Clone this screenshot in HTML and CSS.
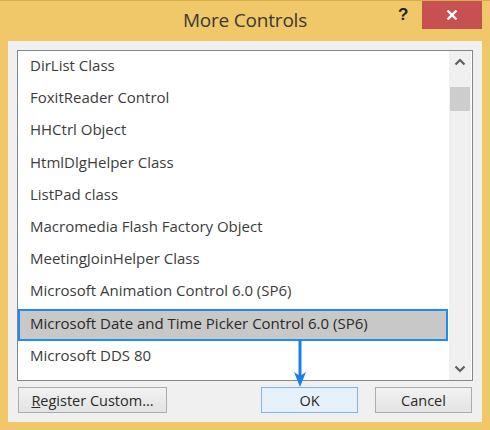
FILE: index.html
```html
<!DOCTYPE html>
<html>
<head>
<meta charset="utf-8">
<link rel="stylesheet" href="styles.css">
</head>
<body>
<div class="window">
  <div class="titlebar">
    <div class="title">More Controls</div>
    <div class="help">?</div>
    <div class="close">
      <svg width="12" height="12" viewBox="0 0 12 12"><path d="M1.5 1.5 L10.5 10.5 M10.5 1.5 L1.5 10.5" stroke="#fff" stroke-width="2.4" fill="none"/></svg>
    </div>
  </div>
  <div class="client">
    <div class="listbox">
      <ul class="items">
        <li>DirList Class</li>
        <li>FoxitReader Control</li>
        <li>HHCtrl Object</li>
        <li>HtmlDlgHelper Class</li>
        <li>ListPad class</li>
        <li>Macromedia Flash Factory Object</li>
        <li>MeetingJoinHelper Class</li>
        <li>Microsoft Animation Control 6.0 (SP6)</li>
        <li class="selected">Microsoft Date and Time Picker Control 6.0 (SP6)</li>
        <li>Microsoft DDS 80</li>
      </ul>
      <div class="scrollbar">
        <div class="sb-btn">
          <svg width="12" height="8" viewBox="0 0 12 8"><path d="M1.5 6.5 L6 2 L10.5 6.5" stroke="#606060" stroke-width="2.2" fill="none"/></svg>
        </div>
        <div class="sb-track"><div class="sb-thumb"></div></div>
        <div class="sb-btn">
          <svg width="12" height="8" viewBox="0 0 12 8"><path d="M1.5 1.5 L6 6 L10.5 1.5" stroke="#606060" stroke-width="2.2" fill="none"/></svg>
        </div>
      </div>
    </div>
    <div class="buttons">
      <button class="btn register"><u>R</u>egister Custom...</button>
      <div class="spacer"></div>
      <button class="btn ok">OK</button>
      <button class="btn cancel">Cancel</button>
    </div>
    <svg class="arrow" width="16" height="48" viewBox="0 0 16 48">
      <path d="M8 0 L8 36" stroke="#1a7fe6" stroke-width="3" fill="none"/>
      <path d="M2 32 L8 36 L14 32 L8 47 Z" fill="#1a7fe6"/>
    </svg>
  </div>
</div>
</body>
</html>
```

FILE: styles.css
```css
* { box-sizing: border-box; }
html, body { margin: 0; padding: 0; }
body {
  width: 490px;
  height: 430px;
  overflow: hidden;
  font-family: "Open Sans", "Noto Sans", sans-serif;
}
.window {
  width: 490px;
  height: 430px;
  background: #f0c86a;
  border-top: 1px solid #d9ad4e;
  display: flex;
  flex-direction: column;
}
.titlebar {
  height: 40px;
  position: relative;
  display: flex;
  justify-content: center;
  align-items: flex-start;
}
.title {
  font-size: 19px;
  color: #3a3a30;
  margin-top: 6px;
  letter-spacing: -0.2px;
}
.help {
  position: absolute;
  left: 398px;
  top: 4px;
  font-family: "Liberation Sans", sans-serif;
  font-weight: bold;
  font-size: 17px;
  color: #222;
}
.close {
  position: absolute;
  left: 422px;
  top: 0;
  width: 60px;
  height: 28px;
  background: #c75050;
  display: flex;
  align-items: center;
  justify-content: center;
}
.client {
  position: relative;
  margin: 0 8px;
  height: 381px;
  background: #f0f0f0;
  padding: 9px 9px 0 9px;
}
.listbox {
  height: 331px;
  border: 1px solid #828790;
  background: #fff;
  display: flex;
}
.items {
  list-style: none;
  margin: 0;
  padding: 0;
  flex: 1;
}
.items li {
  height: 32.2px;
  line-height: 25px;
  padding: 0 0 3px 10px;
  font-size: 15px;
  color: #3c3c3c;
  border: 2px solid transparent;
  white-space: nowrap;
}
.items li.selected {
  background: #c8c8c8;
  border-color: #1e8cf0;
  color: #2a2a2a;
  margin-right: 1px;
}
.scrollbar {
  width: 22px;
  background: #f0f0f0;
  display: flex;
  flex-direction: column;
  margin: 0 1px 0 0;
}
.sb-btn {
  height: 22px;
  display: flex;
  align-items: center;
  justify-content: center;
}
.sb-track {
  flex: 1;
  padding: 14px 1px 0 1px;
}
.sb-thumb {
  height: 24px;
  background: #cdcdcd;
}
.buttons {
  display: flex;
  margin: 6px 1px 0 1px;
  gap: 17px;
}
.spacer { flex: 1; }
.btn {
  flex-shrink: 0;
  height: 26px;
  font-family: "Open Sans", "Noto Sans", sans-serif;
  font-size: 14.5px;
  color: #2a2a2a;
  border: 1px solid #acacac;
  background: linear-gradient(#f2f2f2, #e3e3e3);
  padding: 0;
}
.register { width: 149px; margin-right: -17px; }
.ok { width: 97px; background: #e5f1fb; border-color: #7eb4ea; }
.cancel { width: 97px; }
.arrow {
  position: absolute;
  left: 284px;
  top: 299px;
}
```
